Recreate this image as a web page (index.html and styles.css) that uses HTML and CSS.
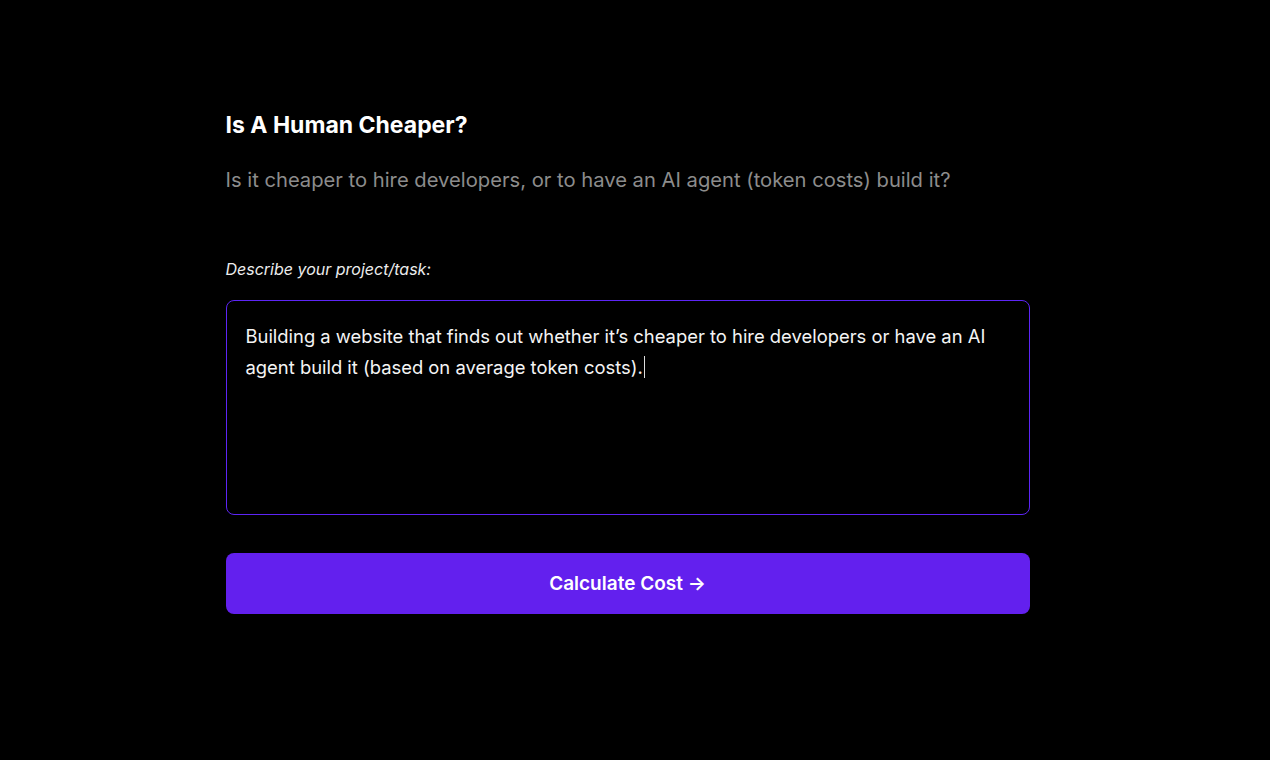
FILE: index.html
```html
<!DOCTYPE html>
<html lang="en">
<head>
  <meta charset="UTF-8" />
  <meta name="viewport" content="width=device-width, initial-scale=1.0"/>
  <title>Is A Human Cheaper?</title>
  <link rel="stylesheet" href="styles.css">
</head>
<body>
  <main class="container">
    <h1 class="title">Is A Human Cheaper?</h1>
    <p class="subtitle">Is it cheaper to hire developers, or to have an AI agent (token costs) build it?</p>

    <form class="cost-form" onsubmit="return false;">
      <label class="label" for="project">Describe your project/task:</label>
      <div class="task-box">
        <span id="project" class="task-text">Building a website that finds out whether it’s cheaper to hire developers or have an AI agent build it (based on average token costs).<span class="caret"></span></span>
      </div>
      <button type="submit" class="calc-button">Calculate Cost →</button>
    </form>
  </main>
</body>
</html>
```

FILE: styles.css
```css
body {
  margin: 0;
  padding: 0 15px 0 0;
  background-color: #000;
  color: #fff;
  font-family: Inter, "Noto Sans", sans-serif;
}

.container {
  width: 804px;
  margin: 0 auto;
  padding-top: 109px;
}

.title {
  font-size: 23px;
  font-weight: 700;
  margin: 0;
  line-height: 32px;
}

.subtitle {
  font-size: 20.2px;
  color: #8c8c8c;
  margin: 24px 0 0;
  line-height: 30px;
}

.cost-form {
  display: flex;
  flex-direction: column;
  margin-top: 62px;
}

.label {
  font-size: 16px;
  font-style: italic;
  color: #ececec;
  line-height: 24px;
}

.task-box {
  margin-top: 19px;
  height: 215px;
  border: 1px solid #5d25f5;
  border-radius: 8px;
  padding: 20px 19px;
  box-sizing: border-box;
}

.task-text {
  font-size: 18.4px;
  line-height: 31px;
  color: #f4f4f4;
}

.caret {
  display: inline-block;
  width: 1px;
  height: 22px;
  background: #ddd;
  vertical-align: -4px;
  margin-left: 1px;
}

.calc-button {
  margin-top: 38px;
  height: 61px;
  border: none;
  border-radius: 8px;
  background-color: #6320ee;
  color: #fff;
  font-family: inherit;
  font-size: 19px;
  font-weight: 600;
  cursor: pointer;
}
```
